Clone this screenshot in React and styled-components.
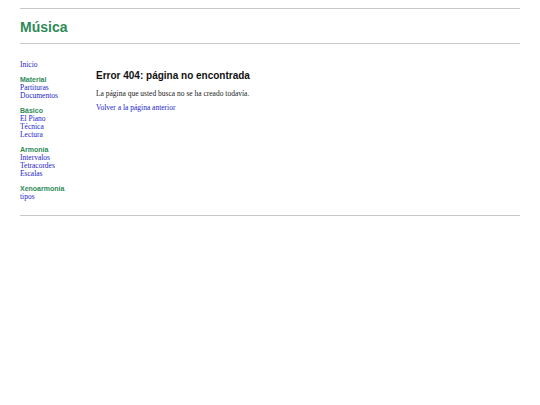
import React from 'react'
import styled, { createGlobalStyle } from 'styled-components'

const GlobalStyle = createGlobalStyle`
  body {
    margin: 0;
    background: #fff;
    font-family: "Liberation Serif", "Times New Roman", serif;
  }
`

const Page = styled.div`
  margin: 8px 20px 0;
`

const Header = styled.header`
  border-top: 1px solid #c8c8c8;
  border-bottom: 1px solid #c8c8c8;
  display: flex;
  align-items: center;
  padding-top: 1px;
  box-sizing: border-box;
  height: 36px;
`

const Title = styled.h1`
  margin: 0;
  font-family: "Liberation Sans", Arial, sans-serif;
  font-size: 14px;
  font-weight: bold;
  color: #2e8b57;
`

const Body = styled.div`
  display: flex;
  padding: 17px 0 14px;
`

const Sidebar = styled.nav`
  width: 76px;
  flex-shrink: 0;
  display: flex;
  flex-direction: column;
  gap: 6px;
`

const Group = styled.div`
  display: flex;
  flex-direction: column;
`

const GroupTitle = styled.div`
  font-family: "Liberation Sans", Arial, sans-serif;
  font-size: 7px;
  font-weight: bold;
  line-height: 9px;
  color: #2e8b57;
`

const NavLink = styled.a`
  font-size: 7.5px;
  line-height: 8px;
  text-decoration: none;
  &, &:visited {
    color: #2424cc;
  }
`

const Content = styled.main`
  flex: 1;
  padding-top: 9px;
`

const Heading = styled.h2`
  margin: 0 0 9px;
  font-family: "Liberation Sans", Arial, sans-serif;
  font-size: 10px;
  font-weight: bold;
  color: #111;
`

const Text = styled.p`
  margin: 0 0 6px;
  font-size: 7.5px;
  line-height: 8px;
  color: #222;
`

const Footer = styled.footer`
  border-top: 1px solid #c8c8c8;
`

const menu = [
  { title: 'Material', items: ['Partituras', 'Documentos'] },
  { title: 'Básico', items: ['El Piano', 'Técnica', 'Lectura'] },
  { title: 'Armonía', items: ['Intervalos', 'Tetracordes', 'Escalas'] },
  { title: 'Xenoarmonía', items: ['tipos'] },
]

export default function App() {
  return (
    <>
      <GlobalStyle />
      <Page>
        <Header>
          <Title>Música</Title>
        </Header>
        <Body>
          <Sidebar>
            <Group>
              <NavLink href="#">Inicio</NavLink>
            </Group>
            {menu.map((g) => (
              <Group key={g.title}>
                <GroupTitle>{g.title}</GroupTitle>
                {g.items.map((it) => (
                  <NavLink key={it} href="#">{it}</NavLink>
                ))}
              </Group>
            ))}
          </Sidebar>
          <Content>
            <Heading>Error 404: página no encontrada</Heading>
            <Text>La página que usted busca no se ha creado todavía.</Text>
            <Text>
              <NavLink href="#">Volver a la página anterior</NavLink>
            </Text>
          </Content>
        </Body>
        <Footer />
      </Page>
    </>
  )
}
